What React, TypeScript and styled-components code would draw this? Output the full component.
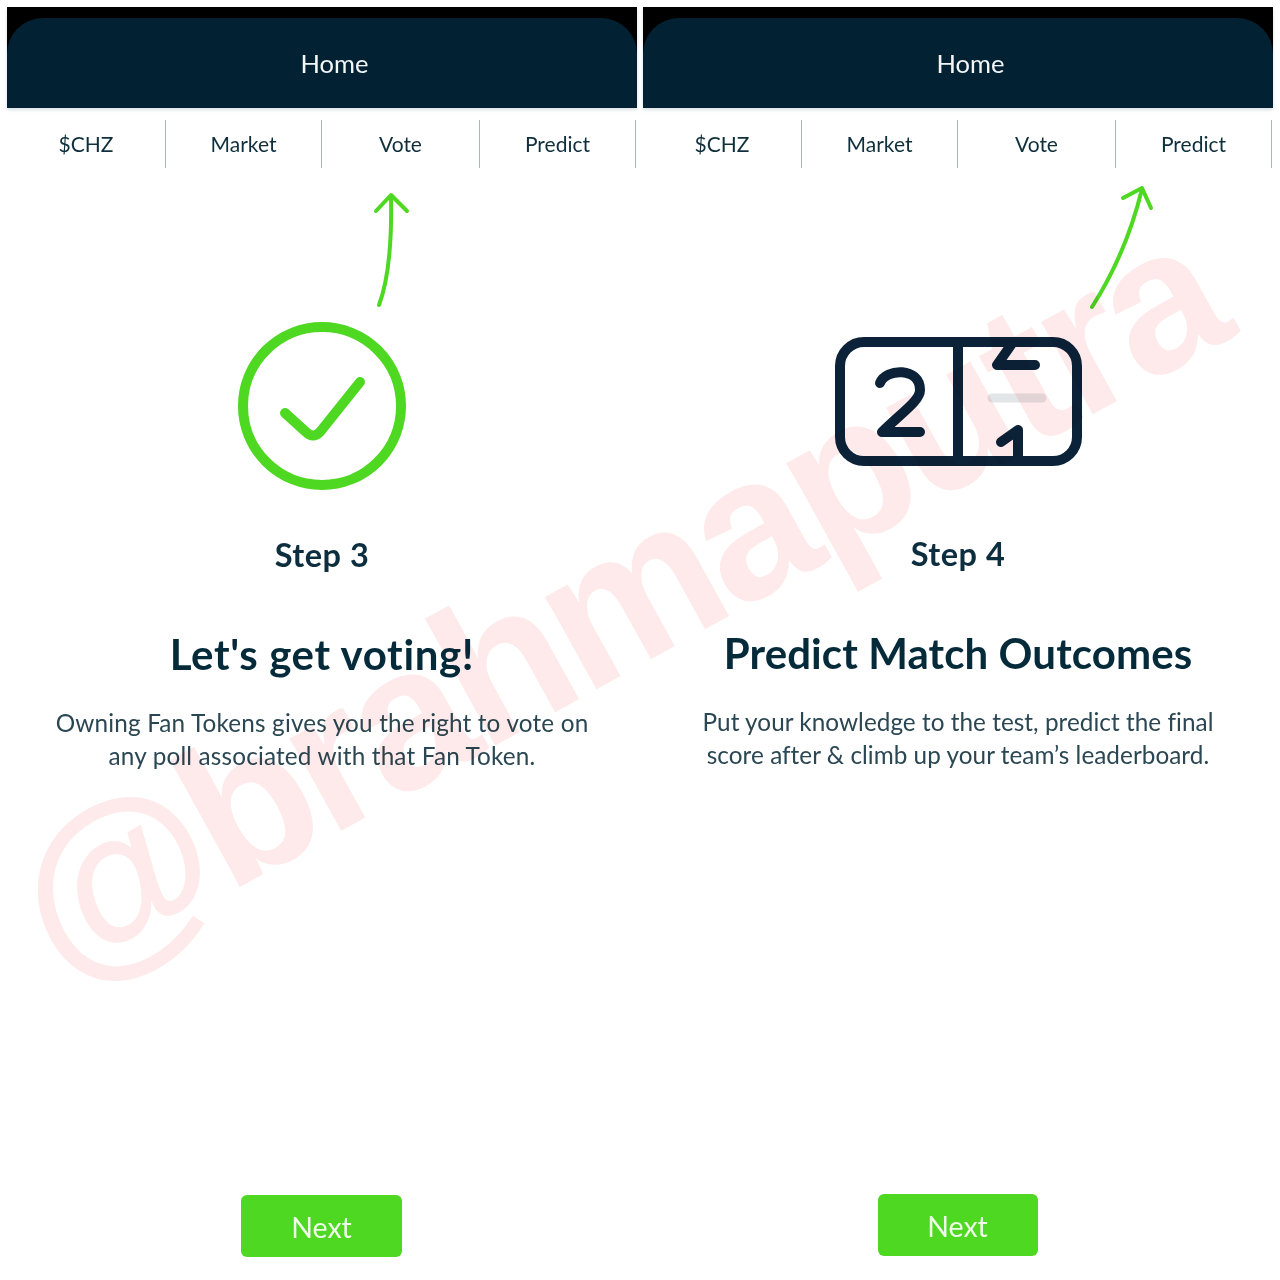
import React from 'react';
import styled, { createGlobalStyle } from 'styled-components';

const GlobalStyle = createGlobalStyle`
  html, body {
    margin: 0;
    padding: 0;
    background: #fff;
  }
`;

const Page = styled.div`
  position: relative;
  width: 1280px;
  height: 1280px;
  overflow: hidden;
  box-sizing: border-box;
  padding: 7px 7px 0;
  display: flex;
  gap: 6px;
  background: #fff;
  font-family: 'Lato', 'Noto Sans', sans-serif;
  color: #0c2e3e;
`;

const Panel = styled.section`
  width: 630px;
  height: 1250px;
  display: flex;
  flex-direction: column;
  align-items: center;
`;

const HeaderShell = styled.div`
  width: 100%;
  height: 101px;
  flex: none;
  background: #000;
  display: flex;
  align-items: flex-end;
  box-shadow: 0 2px 3px rgba(150, 170, 180, 0.35);
`;

const Header = styled.header`
  width: 100%;
  height: 90px;
  box-sizing: border-box;
  padding: 0 0 1px 25px;
  background: #022133;
  border-radius: 36px 36px 0 0;
  display: flex;
  align-items: center;
  justify-content: center;
  color: #f2f6f7;
  font-size: 25.5px;
`;

const Tabs = styled.nav`
  width: 100%;
  margin-top: 12px;
  flex: none;
  display: grid;
  grid-template-columns: 159px 156px 158px 156px;
`;

const Tab = styled.div`
  height: 48px;
  box-sizing: border-box;
  padding-bottom: 2px;
  border-right: 1px solid #aab7bd;
  display: flex;
  align-items: center;
  justify-content: center;
  font-size: 21px;
  color: #0f2f3c;
`;

const Art = styled.svg<{ $height: number }>`
  display: block;
  flex: none;
  width: 630px;
  height: ${p => p.$height}px;
`;

const Step = styled.div`
  font-size: 32.5px;
  font-weight: 700;
  line-height: 40px;
  color: #0c2e3e;
  letter-spacing: 0.5px;
`;

const Title = styled.h1<{ $tracking?: number }>`
  margin: 57px 0 0;
  font-size: 42px;
  font-weight: 700;
  line-height: 44px;
  color: #052a3a;
  letter-spacing: ${p => p.$tracking ?? 0.2}px;
`;

const Body = styled.p<{ $tracking?: number }>`
  margin: 30px 0 0;
  font-size: 24.3px;
  font-weight: 400;
  line-height: 33px;
  text-align: center;
  color: #2b4753;
  letter-spacing: ${p => p.$tracking ?? 0}px;
`;

const NextButton = styled.button<{ $lift?: number; $wide?: boolean }>`
  margin-top: auto;
  margin-bottom: ${p => p.$lift ?? 0}px;
  margin-right: 1px;
  width: ${p => (p.$wide ? 161 : 160)}px;
  height: 62px;
  padding: 1px 0 0;
  border: 0;
  border-radius: 6px;
  background: #4ed822;
  color: #eefbe8;
  font-family: inherit;
  font-size: 28.5px;
  font-weight: 400;
`;

const Watermark = styled.div`
  position: absolute;
  left: 63px;
  top: 816px;
  transform-origin: 0 169px;
  transform: rotate(-29deg);
  font-family: 'Liberation Sans', Arial, sans-serif;
  font-size: 200px;
  font-weight: 700;
  letter-spacing: -6.5px;
  line-height: 1;
  white-space: nowrap;
  color: #feeaea;
  mix-blend-mode: multiply;
  pointer-events: none;
`;

const GREEN = '#4ed822';
const NAVY = '#0b2238';

const CheckArt: React.FC = () => (
  <Art $height={367} viewBox="0 0 630 367" fill="none" strokeLinecap="round" strokeLinejoin="round">
    <g stroke={GREEN} strokeWidth="4">
      <path d="M372 137 C381 113 385 75 384 28" />
      <path d="M369 43 L384 27 L400 43" />
    </g>
    <circle cx="315" cy="238" r="79" stroke={GREEN} strokeWidth="10" />
    <path d="M278 245 L299 264 Q306 271 313 264 L353 214" stroke={GREEN} strokeWidth="10" />
  </Art>
);

const ScoreArt: React.FC = () => (
  <Art $height={366} viewBox="0 0 630 366" fill="none" strokeLinecap="round" strokeLinejoin="round">
    <g stroke={GREEN} strokeWidth="4">
      <path d="M449 139 C472 103 489 62 499 21" />
      <path d="M480 30 L499 20 L508 40" />
    </g>
    <g stroke={NAVY} strokeWidth="10">
      <rect x="197" y="174" width="237" height="119" rx="24" />
      <path d="M315 174 V293" />
      <path d="M237 215 C243 200 277 199 277 222 C277 232 262 242 239 264 H277" />
      <path d="M368 177 L354 197 H392" />
      <path d="M358 274 L375 262 V291" />
    </g>
    <path d="M349 230 H399" stroke="#e3e6e8" strokeWidth="9" />
  </Art>
);

const tabs = ['$CHZ', 'Market', 'Vote', 'Predict'];

const TabBar: React.FC = () => (
  <Tabs>
    {tabs.map(t => (
      <Tab key={t}>{t}</Tab>
    ))}
  </Tabs>
);

export default function App() {
  return (
    <Page>
      <GlobalStyle />
      <Panel>
        <HeaderShell>
          <Header>Home</Header>
        </HeaderShell>
        <TabBar />
        <CheckArt />
        <Step>Step 3</Step>
        <Title $tracking={0.65}>Let's get voting!</Title>
        <Body $tracking={0.17}>
          Owning Fan Tokens gives you the right to vote on
          <br />
          any poll associated with that Fan Token.
        </Body>
        <NextButton $wide>Next</NextButton>
      </Panel>
      <Panel>
        <HeaderShell>
          <Header>Home</Header>
        </HeaderShell>
        <TabBar />
        <ScoreArt />
        <Step>Step 4</Step>
        <Title $tracking={0.1}>Predict Match Outcomes</Title>
        <Body $tracking={0.04}>
          Put your knowledge to the test, predict the final
          <br />
          score after &amp; climb up your team’s leaderboard.
        </Body>
        <NextButton $lift={1}>Next</NextButton>
      </Panel>
      <Watermark>@brahmaputra</Watermark>
    </Page>
  );
}
